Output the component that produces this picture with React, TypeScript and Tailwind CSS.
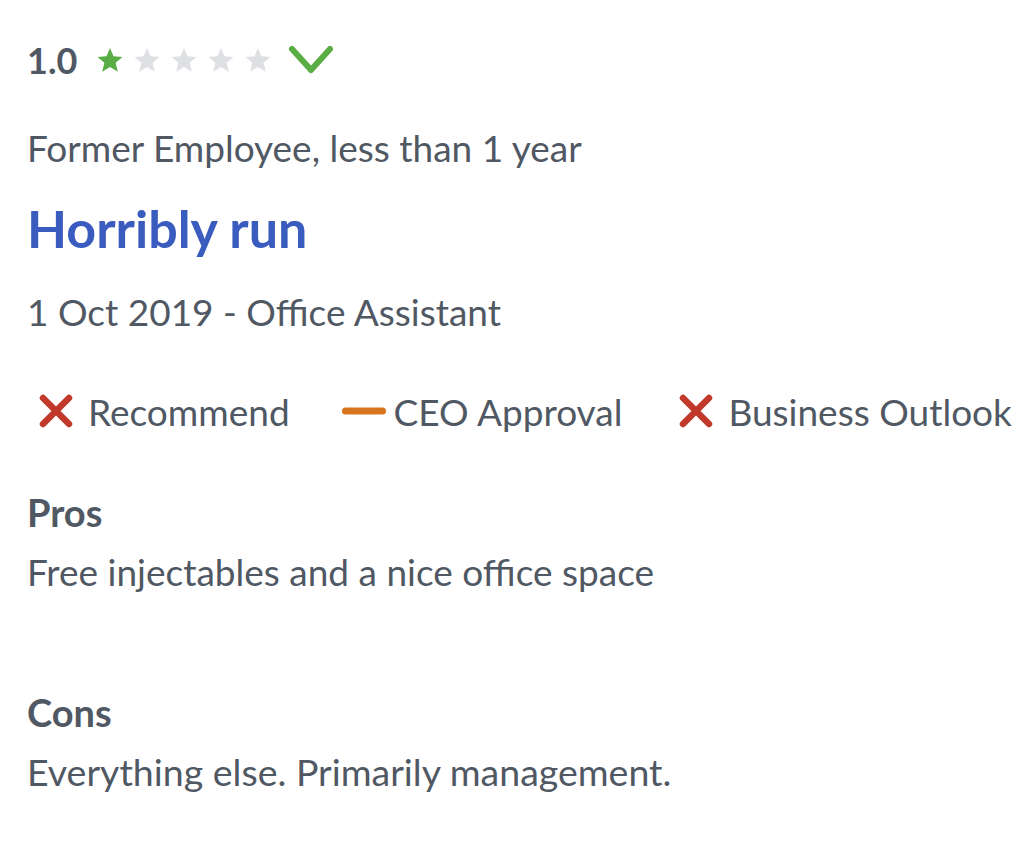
import React from 'react'

const font = { fontFamily: 'Lato, "Open Sans", sans-serif' }

function Star({ filled }: { filled: boolean }) {
  return (
    <svg width="28" height="26" viewBox="0 0 24 23" className="shrink-0">
      <path
        d="M12 0.8l3.1 7.4 7.9 0.6-6 5.2 1.9 7.8L12 17.6l-6.9 4.2 1.9-7.8-6-5.2 7.9-0.6z"
        fill={filled ? '#5aac44' : '#dfe0e4'}
      />
    </svg>
  )
}

function Cross() {
  return (
    <svg width="34" height="34" viewBox="0 0 34 34" className="shrink-0">
      <path d="M4 4L30 30M30 4L4 30" stroke="#c1392b" strokeWidth="6.5" strokeLinecap="round" />
    </svg>
  )
}

function Dash() {
  return (
    <svg width="44" height="34" viewBox="0 0 44 34" className="shrink-0">
      <path d="M3.5 17H40.5" stroke="#d6771f" strokeWidth="7" strokeLinecap="round" />
    </svg>
  )
}

const RATINGS = [
  { label: 'Recommend', icon: 'x', gap: 'gap-[15px] ml-[12px]' },
  { label: 'CEO Approval', icon: 'dash', gap: 'gap-[8px] ml-[52px]' },
  { label: 'Business Outlook', icon: 'x', gap: 'gap-[15px] ml-[57px]' },
]

export default function App() {
  return (
    <div className="bg-white min-h-[851px] w-[1024px] px-[27px] pt-[38px] text-[#505863]" style={font}>
      <div className="flex items-center h-[44px]">
        <span className="text-[36px] font-bold leading-none">1.0</span>
        <div className="flex items-center gap-[9px] ml-[19px]">
          {[0, 1, 2, 3, 4].map(i => <Star key={i} filled={i === 0} />)}
        </div>
        <svg width="46" height="30" viewBox="0 0 46 30" className="ml-[16px]">
          <path d="M4 4L23 25L42 4" stroke="#5aac44" strokeWidth="6" fill="none" strokeLinecap="round" strokeLinejoin="round" />
        </svg>
      </div>

      <p className="text-[37px] leading-[48px] mt-[42px]">Former Employee, less than 1 year</p>
      <h1 className="text-[52px] font-bold leading-[60px] mt-[26px] text-[#3a5cbf]">Horribly run</h1>
      <p className="text-[37px] leading-[48px] mt-[30px]">1 Oct 2019 - Office Assistant</p>

      <div className="flex items-center mt-[55px] h-[40px] whitespace-nowrap">
        {RATINGS.map(r => (
          <div key={r.label} className={'flex items-center shrink-0 ' + r.gap}>
            {r.icon === 'x' ? <Cross /> : <Dash />}
            <span className="text-[37px] leading-none">{r.label}</span>
          </div>
        ))}
      </div>

      <h3 className="text-[38px] font-bold leading-[48px] mt-[57px]">Pros</h3>
      <p className="text-[37px] leading-[48px] mt-[12px]">Free injectables and a nice office space</p>
      <h3 className="text-[38px] font-bold leading-[48px] mt-[92px]">Cons</h3>
      <p className="text-[37.5px] leading-[48px] mt-[12px]">Everything else. Primarily management.</p>
    </div>
  )
}
